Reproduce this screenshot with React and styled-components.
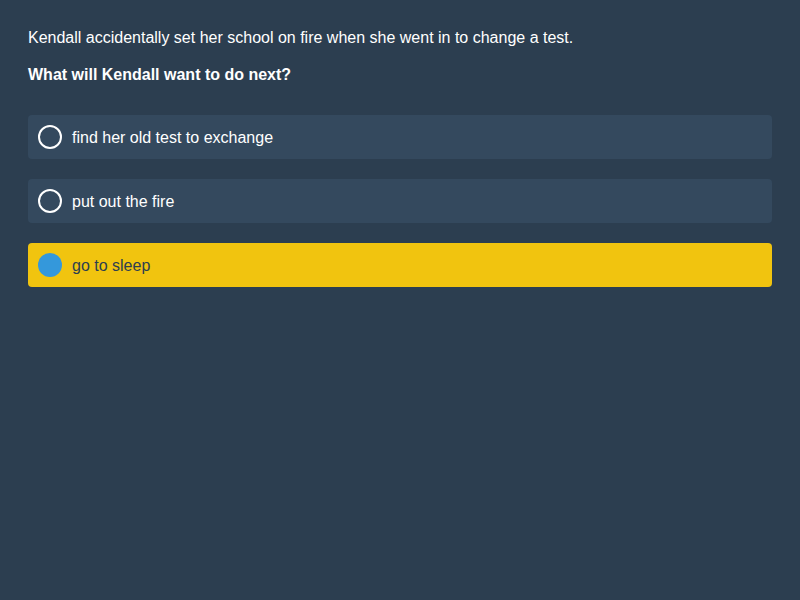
import React, { useState } from 'react'
import styled, { createGlobalStyle } from 'styled-components'

const GlobalStyle = createGlobalStyle`
  html, body {
    margin: 0;
    padding: 0;
    background: #2c3e50;
    font-family: "Liberation Sans", Arial, sans-serif;
  }
`

const Page = styled.div`
  min-height: 600px;
  box-sizing: border-box;
  padding: 28px;
  color: #ffffff;
`

const Prompt = styled.p`
  margin: 0;
  font-size: 16px;
  line-height: 20px;
`

const Question = styled.p`
  margin: 17px 0 0;
  font-size: 16px;
  line-height: 20px;
  font-weight: bold;
`

const Options = styled.div`
  margin-top: 30px;
  display: flex;
  flex-direction: column;
  gap: 20px;
`

const Option = styled.div`
  display: flex;
  align-items: center;
  gap: 10px;
  height: 44px;
  box-sizing: border-box;
  padding: 0 10px;
  border-radius: 4px;
  background: ${p => (p.$selected ? '#f1c40f' : '#34495e')};
  color: ${p => (p.$selected ? '#2c3e50' : '#ffffff')};
  font-size: 16px;
  cursor: pointer;
`

const Label = styled.span`
  padding-top: 2px;
`

const Radio = styled.span`
  width: 24px;
  height: 24px;
  box-sizing: border-box;
  border-radius: 50%;
  flex-shrink: 0;
  border: ${p => (p.$selected ? 'none' : '2px solid #ffffff')};
  background: ${p => (p.$selected ? '#3498db' : 'transparent')};
`

const choices = ['find her old test to exchange', 'put out the fire', 'go to sleep']

export default function App() {
  const [selected, setSelected] = useState(2)
  return (
    <Page>
      <GlobalStyle />
      <Prompt>Kendall accidentally set her school on fire when she went in to change a test.</Prompt>
      <Question>What will Kendall want to do next?</Question>
      <Options>
        {choices.map((c, i) => (
          <Option key={c} $selected={selected === i} onClick={() => setSelected(i)}>
            <Radio $selected={selected === i} />
            <Label>{c}</Label>
          </Option>
        ))}
      </Options>
    </Page>
  )
}
